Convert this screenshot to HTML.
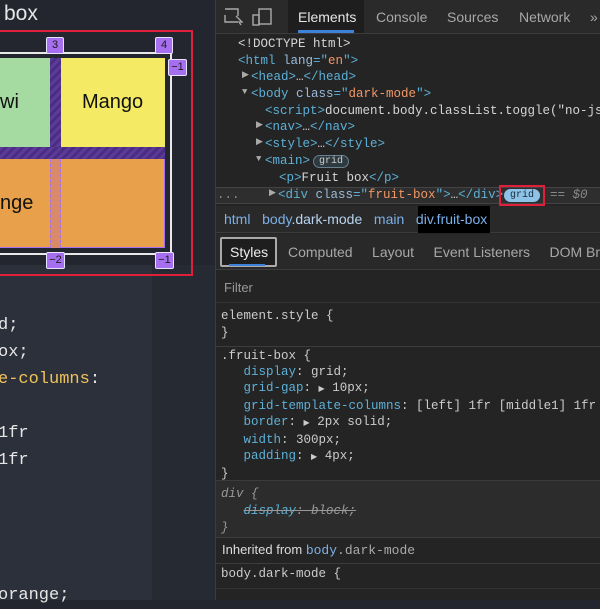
<!DOCTYPE html>
<html><head><style>
*{margin:0;padding:0;box-sizing:border-box}
body{width:600px;height:600px;overflow:hidden;background:#23262e;position:relative;font-family:"Liberation Sans",sans-serif}
.a{position:absolute}
.mono{font-family:"Liberation Mono",monospace}
.badge{position:absolute;background:#a66ff0;border:1px solid #e8e0ff;color:#1a1a1a;font-size:11px;width:18px;height:17px;text-align:center;line-height:15px;border-radius:2px}
.dt{font-family:"Liberation Mono",monospace;font-size:12.5px;color:#d5d5d5;position:absolute;white-space:pre}
.t{color:#5db0d7}.at{color:#9bbbdc}.v{color:#f29766}.p{color:#5db0d7}
</style></head><body>
<div class="a" style="left:0;top:265px;width:152px;height:335px;background:#2c303a"></div>
<div class="a" style="left:152px;top:265px;width:63px;height:335px;background:#262a33"></div>
<div class="a" style="left:4px;top:2px;color:#e6e6e6;font-size:21px">box</div>
<div class="a" style="left:-10px;top:30px;width:203px;height:246px;border:2px solid #e0203a"></div>
<div class="a" style="left:-10px;top:52px;width:182px;height:203px;border:2px solid #e8e8e8"></div>
<div class="a" style="left:0;top:58px;width:50px;height:89px;background:#a5dba0"></div>
<div class="a" style="left:61px;top:58px;width:104px;height:89px;background:#f4ea64"></div>
<div class="a" style="left:0;top:147px;width:165px;height:12px;background:repeating-linear-gradient(135deg,#5b3a9a 0 3px,#4a2d80 3px 6px)"></div>
<div class="a" style="left:50px;top:58px;width:11px;height:89px;background:repeating-linear-gradient(135deg,#5b3a9a 0 3px,#4a2d80 3px 6px)"></div>
<div class="a" style="left:0;top:159px;width:165px;height:89px;background:#e8a04a;border-right:1px solid #a66ff0;border-bottom:1px solid #a66ff0"></div>
<div class="a" style="left:50px;top:159px;width:11px;height:89px;background:#d88a6a;border-left:1px dashed #a66ff0;border-right:1px dashed #a66ff0"></div>
<div class="a" style="left:0;top:91px;font-size:20px;color:#111">wi</div>
<div class="a" style="left:82px;top:91px;font-size:20px;color:#111">Mango</div>
<div class="a" style="left:0;top:192px;font-size:20px;color:#111">nge</div>
<div class="badge" style="left:46px;top:37px">3</div>
<div class="badge" style="left:155px;top:37px">4</div>
<div class="badge" style="left:168px;top:59px;width:19px">−1</div>
<div class="badge" style="left:46px;top:252px;width:19px">−2</div>
<div class="badge" style="left:155px;top:252px;width:19px">−1</div>
<div class="a mono" style="left:-2px;top:312px;font-size:17px;color:#e6e6e6;line-height:27px;white-space:pre">d;
ox;
<span style="color:#f0c25a">e-columns</span>:

1fr
1fr




orange;</div>
<div class="a" style="left:215px;top:0;width:385px;height:600px;background:#242424;border-left:1px solid #3c3c3c"></div>
<div class="a" style="left:216px;top:0;width:384px;height:34px;background:#2a2a2a;border-bottom:1px solid #3c3c3c"></div>
<div class="a" style="left:288px;top:0;width:76px;height:33px;background:#1e1e1e"></div>
<div class="a" style="left:298px;top:30px;width:56px;height:3px;background:#3d82d8"></div>
<svg class="a" style="left:224px;top:7px" width="50" height="20"><rect x="1" y="2" width="13" height="13" fill="none" stroke="#aaa" stroke-width="1.4" stroke-dasharray="20 6"/><path d="M12 9 l6 6 -3 0 2 3" fill="none" stroke="#aaa" stroke-width="1.3"/><rect x="35" y="2" width="12" height="15" fill="none" stroke="#aaa" stroke-width="1.4"/><rect x="29" y="8" width="6" height="10" fill="none" stroke="#aaa" stroke-width="1.4"/></svg>
<div class="a" style="left:298px;top:9px;font-size:14px;color:#e8e8e8">Elements</div>
<div class="a" style="left:376px;top:9px;font-size:14px;color:#a8a8a8">Console</div>
<div class="a" style="left:447px;top:9px;font-size:14px;color:#a8a8a8">Sources</div>
<div class="a" style="left:519px;top:9px;font-size:14px;color:#a8a8a8">Network</div>
<div class="a" style="left:590px;top:9px;font-size:14px;color:#a8a8a8">»</div>
<div class="dt" style="left:238px;top:37px">&lt;!DOCTYPE html&gt;</div>
<div class="dt" style="left:238px;top:54px"><span class="t">&lt;html </span><span class="at">lang</span><span class="t">="</span><span class="v">en</span><span class="t">"&gt;</span></div>
<div class="dt" style="left:242px;top:70px;color:#aaa;font-size:9px">▶</div>
<div class="dt" style="left:251px;top:70px"><span class="t">&lt;head&gt;</span>…<span class="t">&lt;/head&gt;</span></div>
<div class="dt" style="left:242px;top:87px;color:#aaa;font-size:9px">▼</div>
<div class="dt" style="left:251px;top:87px"><span class="t">&lt;body </span><span class="at">class</span><span class="t">="</span><span class="v">dark-mode</span><span class="t">"&gt;</span></div>
<div class="dt" style="left:265px;top:104px"><span class="t">&lt;script&gt;</span>document.body.classList.toggle("no-js</div>
<div class="dt" style="left:256px;top:120px;color:#aaa;font-size:9px">▶</div>
<div class="dt" style="left:265px;top:120px"><span class="t">&lt;nav&gt;</span>…<span class="t">&lt;/nav&gt;</span></div>
<div class="dt" style="left:256px;top:137px;color:#aaa;font-size:9px">▶</div>
<div class="dt" style="left:265px;top:137px"><span class="t">&lt;style&gt;</span>…<span class="t">&lt;/style&gt;</span></div>
<div class="dt" style="left:256px;top:154px;color:#aaa;font-size:9px">▼</div>
<div class="dt" style="left:265px;top:154px"><span class="t">&lt;main&gt;</span></div>
<div class="a mono" style="left:313px;top:155px;width:36px;height:13px;border:1px solid #6a8090;border-radius:7px;background:#2d3a40;color:#ccc;font-size:10px;text-align:center;line-height:11px">grid</div>
<div class="dt" style="left:279px;top:171px"><span class="t">&lt;p&gt;</span>Fruit box<span class="t">&lt;/p&gt;</span></div>
<div class="a" style="left:216px;top:187px;width:384px;height:17px;background:#2e2e2e;border-top:1px solid #444;border-bottom:1px solid #444"></div>
<div class="dt" style="left:217px;top:188px;color:#888">...</div>
<div class="dt" style="left:269px;top:188px;color:#aaa;font-size:9px">▶</div>
<div class="dt" style="left:278px;top:188px"><span class="t">&lt;div </span><span class="at">class</span><span class="t">="</span><span class="v">fruit-box</span><span class="t">"&gt;</span>…<span class="t">&lt;/div&gt;</span></div>
<div class="a" style="left:499px;top:185px;width:46px;height:21px;border:2px solid #e0203a"></div>
<div class="a mono" style="left:504px;top:189px;width:36px;height:13px;border-radius:7px;background:#8ec3e8;color:#1a2a3a;font-size:10px;text-align:center;line-height:13px">grid</div>
<div class="dt" style="left:550px;top:188px;color:#888">== <i>$0</i></div>
<div class="a" style="left:216px;top:206px;width:384px;height:27px;background:#292929;border-bottom:1px solid #3c3c3c"></div>
<div class="a" style="left:418px;top:206px;width:72px;height:27px;background:#000"></div>
<div class="a" style="left:224px;top:211px;font-size:14px;color:#7cb0e8;white-space:pre">html   body<span style="color:#b8d4f0">.dark-mode</span>   main   div.fruit-box</div>
<div class="a" style="left:216px;top:234px;width:384px;height:36px;background:#292929;border-bottom:1px solid #3c3c3c"></div>
<div class="a" style="left:220px;top:237px;width:57px;height:30px;border:2px solid #aaa;border-radius:2px;background:#1e1e1e"></div>
<div class="a" style="left:229px;top:264px;width:36px;height:2px;background:#3d82d8"></div>
<div class="a" style="left:230px;top:244px;font-size:14px;color:#eee;white-space:pre">Styles</div>
<div class="a" style="left:288px;top:244px;font-size:14px;color:#a8a8a8;white-space:pre">Computed     Layout     Event Listeners     DOM Br</div>
<div class="a" style="left:216px;top:270px;width:384px;height:33px;background:#242424;border-bottom:1px solid #333"></div>
<div class="a" style="left:224px;top:280px;font-size:13px;color:#999">Filter</div>
<div class="a" style="left:216px;top:346px;width:384px;height:1px;background:#3c3c3c"></div>
<div class="a" style="left:216px;top:480px;width:384px;height:1px;background:#3c3c3c"></div>
<div class="a" style="left:216px;top:481px;width:384px;height:56px;background:#2c2c2c"></div>
<div class="a" style="left:216px;top:537px;width:384px;height:1px;background:#3c3c3c"></div>
<div class="a" style="left:216px;top:563px;width:384px;height:1px;background:#3c3c3c"></div>
<div class="dt" style="left:221px;top:308px;line-height:16.5px;color:#ccc">element.style {
}</div>
<div class="dt" style="left:221px;top:348px;line-height:16px;color:#ccc">.fruit-box {
   <span class="p">display</span>: grid;
   <span class="p">grid-gap</span>: <span style="font-size:8px">▶</span> 10px;
   <span class="p">grid-template-columns</span>: [left] 1fr [middle1] 1fr
   <span class="p">border</span>: <span style="font-size:8px">▶</span> 2px solid;
   <span class="p">width</span>: 300px;
   <span class="p">padding</span>: <span style="font-size:8px">▶</span> 4px;
}</div>
<div class="dt" style="left:221px;top:486px;line-height:17px;color:#999;font-style:italic">div {
   <s><span class="p">display</span>: block;</s>
}</div>
<div class="a" style="left:222px;top:542px;font-size:13px;color:#ddd">Inherited from <span class="mono" style="color:#7cb0e8">body</span><span class="mono" style="color:#aaa">.dark-mode</span></div>
<div class="dt" style="left:221px;top:567px;color:#ccc">body.dark-mode {</div>
<div class="a" style="left:216px;top:588px;width:384px;height:12px;background:#242424;border-top:1px solid #333"></div>
</body></html>
